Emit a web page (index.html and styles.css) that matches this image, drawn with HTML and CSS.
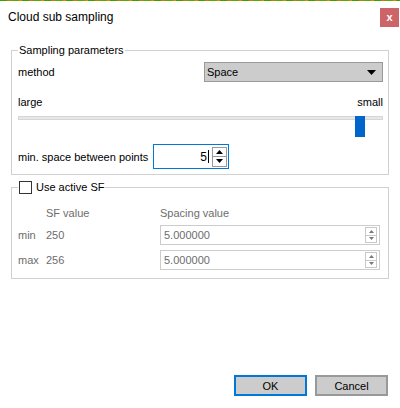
FILE: index.html
```html
<!DOCTYPE html>
<html>
<head>
<meta charset="utf-8">
<link rel="stylesheet" href="styles.css">
</head>
<body>
<div class="window">
  <div class="edge"></div>
  <div class="titlebar">
    <span class="title">Cloud sub sampling</span>
    <span class="close">x</span>
  </div>

  <fieldset class="group g1">
    <legend>Sampling parameters</legend>
    <div class="row method-row">
      <span class="label">method</span>
      <div class="combo">
        <span>Space</span>
        <svg class="combo-arrow" width="9" height="5" viewBox="0 0 9 5"><path d="M0 0H9L4.5 5Z" fill="#000"/></svg>
      </div>
    </div>
    <div class="row ends">
      <span class="label">large</span>
      <span class="label">small</span>
    </div>
    <div class="slider">
      <div class="track"></div>
      <div class="thumb" style="left: 337px"></div>
    </div>
    <div class="row space-row">
      <span class="label">min. space between points</span>
      <div class="spin active">
        <span class="spin-text">5<span class="caret"></span></span>
        <div class="spin-btns">
          <div class="sb"><svg width="7" height="4" viewBox="0 0 7 4"><path d="M3.5 0L7 4H0Z" fill="#000"/></svg></div>
          <div class="sb"><svg width="7" height="4" viewBox="0 0 7 4"><path d="M0 0H7L3.5 4Z" fill="#000"/></svg></div>
        </div>
      </div>
    </div>
  </fieldset>

  <fieldset class="group g2">
    <legend><span class="checkbox"></span><span>Use active SF</span></legend>
    <div class="sf-grid">
      <span></span><span class="dim">SF value</span><span class="dim">Spacing value</span>
      <span class="dim">min</span><span class="dim">250</span>
      <div class="spin disabled">
        <span class="spin-text left">5.000000</span>
        <div class="spin-btns small">
          <div class="sb"><svg width="5" height="3" viewBox="0 0 5 3"><path d="M2.5 0L5 3H0Z" fill="#777"/></svg></div>
          <div class="sb"><svg width="5" height="3" viewBox="0 0 5 3"><path d="M0 0H5L2.5 3Z" fill="#777"/></svg></div>
        </div>
      </div>
      <span class="dim">max</span><span class="dim">256</span>
      <div class="spin disabled">
        <span class="spin-text left">5.000000</span>
        <div class="spin-btns small">
          <div class="sb"><svg width="5" height="3" viewBox="0 0 5 3"><path d="M2.5 0L5 3H0Z" fill="#777"/></svg></div>
          <div class="sb"><svg width="5" height="3" viewBox="0 0 5 3"><path d="M0 0H5L2.5 3Z" fill="#777"/></svg></div>
        </div>
      </div>
    </div>
  </fieldset>

  <div class="footer">
    <button class="btn default">OK</button>
    <button class="btn">Cancel</button>
  </div>
</div>
</body>
</html>
```

FILE: styles.css
```css
html, body {
  margin: 0;
  padding: 0;
  background: #fff;
}
body {
  font-family: "Liberation Sans", Arial, sans-serif;
  font-size: 11px;
  color: #000;
}
.window {
  width: 400px;
  height: 408px;
  display: flex;
  flex-direction: column;
  box-sizing: border-box;
}
.edge {
  height: 1px;
  flex-shrink: 0;
  background: repeating-linear-gradient(90deg, #3aa000 0 7px, #c87a10 7px 11px, #5aa800 11px 19px, #e08a00 19px 22px);
}
.titlebar {
  height: 42px;
  flex-shrink: 0;
  display: flex;
  justify-content: space-between;
  align-items: flex-start;
}
.title {
  margin-left: 8px;
  margin-top: 9px;
  font-size: 12px;
  line-height: 14px;
}
.close {
  margin-top: 7px;
  margin-right: 1px;
  width: 19px;
  height: 19px;
  background: #cd6467;
  color: #fff;
  font-weight: bold;
  font-size: 11px;
  line-height: 18px;
  text-align: center;
}
.group {
  margin: 0 11px;
  border: 1px solid #d0d0d0;
  min-width: 0;
}
.group legend {
  padding: 0 1px;
  margin-left: 0;
  line-height: 14px;
  font-size: 11px;
}
.g1 {
  padding: 0 5px 5px 6px;
}
.row {
  display: flex;
  align-items: center;
  justify-content: space-between;
}
.label {
  line-height: 14px;
  white-space: nowrap;
}
.method-row {
  margin-top: 5px;
  height: 20px;
}
.combo {
  width: 179px;
  height: 20px;
  box-sizing: border-box;
  border: 1px solid #999;
  background: #ccc;
  display: flex;
  align-items: center;
  justify-content: space-between;
  padding: 0 6px 0 2px;
}
.combo-arrow {
  display: block;
}
.ends {
  margin-top: 13px;
  height: 14px;
}
.slider {
  position: relative;
  margin-top: 5px;
  height: 21px;
}
.track {
  margin-top: 7px;
  height: 4px;
  box-sizing: border-box;
  border: 1px solid #d6d6d6;
  background: #e7e7e7;
}
.thumb {
  position: absolute;
  top: 0;
  width: 10px;
  height: 21px;
  background: #0066cc;
}
.space-row {
  margin-top: 7px;
  height: 25px;
  justify-content: flex-start;
}
.space-row .label {
  width: 135px;
  flex-shrink: 0;
}
.spin {
  box-sizing: border-box;
  display: flex;
  align-items: center;
  background: #fff;
}
.spin.active {
  width: 76px;
  height: 25px;
  border: 1px solid #0078d7;
  padding: 0 1px 0 2px;
}
.spin-text {
  flex: 1;
  text-align: right;
  padding-right: 3px;
  line-height: 14px;
  font-size: 12px;
}
.spin-text.left {
  text-align: left;
  padding-left: 3px;
  color: #6d6d6d;
  font-size: 11px;
}
.caret {
  display: inline-block;
  width: 1px;
  height: 13px;
  background: #000;
  margin-left: 1px;
  vertical-align: -2px;
}
.spin-btns {
  display: flex;
  flex-direction: column;
  width: 15px;
  height: 20px;
  border: 1px solid #999;
  box-sizing: border-box;
  background: #fff;
}
.spin-btns .sb {
  flex: 1;
  display: flex;
  align-items: center;
  justify-content: center;
}
.spin-btns .sb + .sb {
  border-top: 1px solid #999;
}
.spin-btns .sb svg {
  display: block;
}
.g2 {
  margin-top: 5px;
  padding: 0 8px 8px 6px;
}
.g2 legend {
  display: flex;
  align-items: center;
  gap: 4px;
}
.checkbox {
  width: 13px;
  height: 13px;
  box-sizing: border-box;
  border: 1px solid #333;
  background: #fff;
}
.sf-grid {
  margin-top: 12px;
  display: grid;
  grid-template-columns: 28px 114px 1fr;
  grid-template-rows: 14px 20px 20px;
  row-gap: 5px;
  align-items: center;
}
.dim {
  color: #6d6d6d;
  line-height: 14px;
}
.spin.disabled {
  height: 20px;
  border: 1px solid #ccc;
  padding: 0 2px 0 0;
}
.spin-btns.small {
  width: 12px;
  height: 16px;
  border-color: #c8c8c8;
}
.spin-btns.small .sb + .sb {
  border-top-color: #c8c8c8;
}
.footer {
  margin-top: auto;
  display: flex;
  justify-content: flex-end;
  gap: 8px;
  padding: 0 12px 12px 0;
}
.btn {
  width: 73px;
  height: 21px;
  box-sizing: border-box;
  background: #ccc;
  border: 2px solid #999;
  font-family: inherit;
  font-size: 11px;
  color: #000;
  padding: 0;
  margin: 0;
}
.btn.default {
  border-color: #0078d7;
}
```
